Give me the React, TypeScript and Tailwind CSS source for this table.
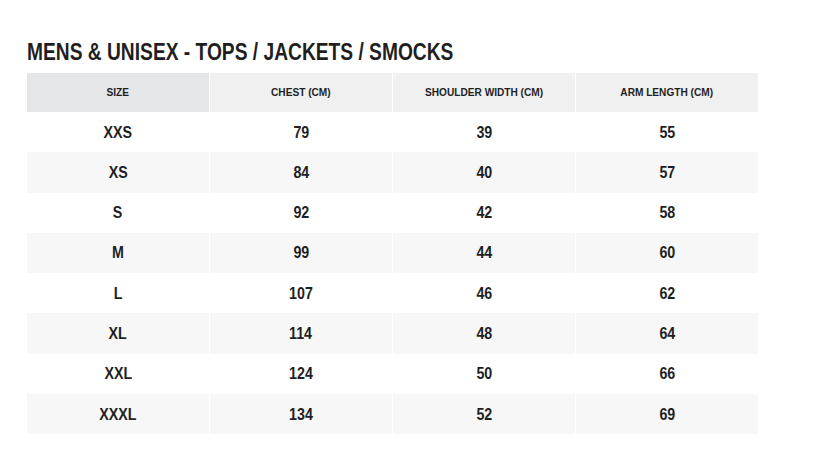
const rows: [string, string, string, string][] = [
  ["XXS", "79", "39", "55"],
  ["XS", "84", "40", "57"],
  ["S", "92", "42", "58"],
  ["M", "99", "44", "60"],
  ["L", "107", "46", "62"],
  ["XL", "114", "48", "64"],
  ["XXL", "124", "50", "66"],
  ["XXXL", "134", "52", "69"],
];

const headers = ["SIZE", "CHEST (CM)", "SHOULDER WIDTH (CM)", "ARM LENGTH (CM)"];

export default function App() {
  return (
    <div
      className="w-[816px] h-[463px] bg-white pl-[27px] pt-[38px] text-[#1f1f1f]"
      style={{ fontFamily: '"Liberation Sans", Arial, sans-serif' }}
    >
      <h1 className="text-[24px] leading-[28px] font-bold mb-[7px] whitespace-nowrap">
        <span className="inline-block origin-left scale-x-[0.8]">
          MENS &amp; UNISEX - TOPS / JACKETS / SMOCKS
        </span>
      </h1>
      <div className="w-[731px] grid grid-cols-4 gap-x-px">
        {headers.map((h, i) => (
          <div
            key={h}
            className={`h-[39px] flex items-center justify-center text-[11.5px] font-bold whitespace-nowrap ${
              i === 0 ? "bg-[#e5e6e8]" : "bg-[#f0f0f0]"
            }`}
          >
            <span className="inline-block scale-x-[0.88]">{h}</span>
          </div>
        ))}
        {rows.map((r, ri) =>
          r.map((c, ci) => (
            <div
              key={`${ri}-${ci}`}
              className={`h-[40.3px] flex items-center justify-center text-[16.8px] font-bold ${
                ri % 2 === 1 ? "bg-[#f7f7f7]" : "bg-white"
              }`}
            >
              <span className="inline-block scale-x-[0.85]">{c}</span>
            </div>
          ))
        )}
      </div>
    </div>
  );
}
